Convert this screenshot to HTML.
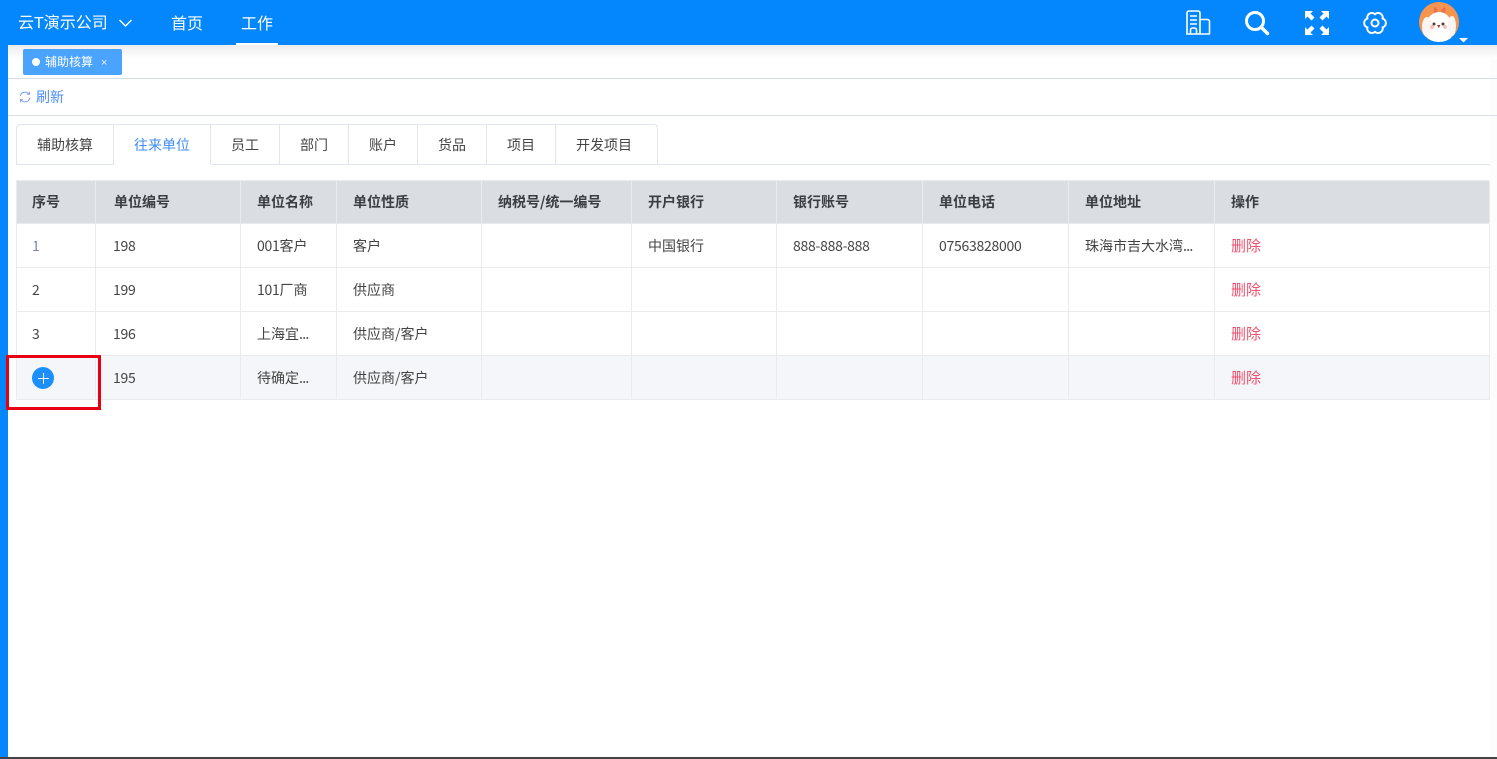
<!DOCTYPE html>
<html><head><meta charset="utf-8">
<style>
*{box-sizing:border-box}
html,body{margin:0;padding:0;width:1497px;height:759px;overflow:hidden;background:#fff}
body{position:relative;font-family:"Noto Sans CJK SC","Liberation Sans",sans-serif;font-size:14px;color:#333}
.a{position:absolute;white-space:nowrap}
.l{position:absolute;background:#e9ebef}
.t{position:absolute;white-space:nowrap;line-height:20px;font-size:14px;color:#444}
.n{letter-spacing:-.27px}
.e{letter-spacing:-.7px}
.h{font-weight:700;color:#3a3d42}
.d{color:#f0506e;font-size:15px}
.tab{position:absolute;top:124px;height:41px;border:1px solid #e1e5ec;border-left:0;line-height:40px;padding-left:20px;font-size:14px;color:#444;background:#fff}
</style></head><body>
<div class="a" style="left:0;top:0;width:1497px;height:45px;background:#0487fc"></div>
<div class="a" style="left:0;top:45px;width:8px;height:714px;background:#0487fc"></div>
<div class="a" style="left:8px;top:45px;width:1489px;height:14px;background:linear-gradient(#ececec,#fff)"></div>
<div class="a" style="left:1490px;top:59px;width:7px;height:698px;background:#fcfcfc"></div>
<div class="a" style="left:18px;top:14px;font-size:16px;line-height:20px;color:#fff;font-family:'Liberation Sans','Noto Sans CJK SC',sans-serif">云T演示公司</div>
<svg class="a" style="left:118px;top:18px" width="15" height="11" viewBox="0 0 15 11"><path d="M1.500 2 L7.500 8 L13.500 2" fill="none" stroke="#fff" stroke-width="1.400"/></svg>
<div class="a" style="left:171px;top:11px;font-size:16px;line-height:22px;color:#fff">首页</div>
<div class="a" style="left:241px;top:11px;font-size:16px;line-height:22px;color:#fff">工作</div>
<div class="a" style="left:236px;top:43px;width:42px;height:2px;background:#fff"></div>
<svg class="a" style="left:1185px;top:10px" width="26" height="25" viewBox="0 0 26 25" fill="none" stroke="#fff" stroke-width="1.600"><path d="M2 24V3a2 2 0 0 1 2-2h9a2 2 0 0 1 2 2V24M15 9.500h7.500a2 2 0 0 1 2 2V24M1 24h24M5 6h7M5 10h7M5 14h7M5.500 24v-4a2 2 0 0 1 2-2h2a2 2 0 0 1 2 2v4"/></svg>
<svg class="a" style="left:1243px;top:9px" width="28" height="27" viewBox="0 0 28 27" fill="none" stroke="#fff"><circle cx="12" cy="12" r="8.500" stroke-width="3"/><path d="M18.500 18.500L24.500 24.500" stroke-width="3.400" stroke-linecap="round"/></svg>
<svg class="a" style="left:1304px;top:10px" width="26" height="26" viewBox="0 0 26 26" fill="#fff"><path d="M1 1h8L6.500 3.500 10.500 7.500 7.500 10.500 3.500 6.500 1 9zM25 1h-8l2.500 2.500-4 4 3 3 4-4L25 9zM1 25h8l-2.500-2.500 4-4-3-3-4 4L1 17zM25 25h-8l2.500-2.500-4-4 3-3 4 4L25 17z"/></svg>
<svg class="a" style="left:1363px;top:12px" width="24" height="22" viewBox="0 0 24 22" fill="none" stroke="#fff" stroke-width="2"><path d="M12 2.200A4.600 4.600 0 0 1 19.620 6.600A4.600 4.600 0 0 1 19.620 15.400A4.600 4.600 0 0 1 12 19.800A4.600 4.600 0 0 1 4.380 15.400A4.600 4.600 0 0 1 4.380 6.600A4.600 4.600 0 0 1 12 2.200Z"/><circle cx="12" cy="11" r="3.500"/></svg>
<svg class="a" style="left:1419px;top:2px" width="40" height="40" viewBox="0 0 40 40"><defs><clipPath id="c"><circle cx="20" cy="20" r="20"/></clipPath></defs><g clip-path="url(#c)"><rect width="40" height="40" fill="#f5954e"/><path d="M19 10C17 3 14 4 15 11ZM22 10C24 3 28 4 26 11Z" fill="#ea6f55"/><ellipse cx="20" cy="27" rx="14" ry="17" fill="#fff"/><ellipse cx="8" cy="25" rx="5" ry="10" fill="#f8f5f2"/><ellipse cx="33" cy="24" rx="4" ry="10" fill="#f8f5f2"/><circle cx="15" cy="22" r="1.500" fill="#5a3a30"/><circle cx="24" cy="22" r="1.500" fill="#5a3a30"/><circle cx="13" cy="25" r="2" fill="#f5c0b8"/><circle cx="26" cy="25" r="2" fill="#f5c0b8"/><path d="M18 23h3.500l-1.700 3z" fill="#a03c30"/></g></svg>
<svg class="a" style="left:1459px;top:38px" width="9" height="5" viewBox="0 0 9 5"><path d="M0 0h9L4.500 4.500z" fill="#fff"/></svg>

<div class="a" style="left:23px;top:49px;width:99px;height:26px;background:#4aa3fd;border-radius:2px"></div>
<div class="a" style="left:32px;top:58px;width:8px;height:8px;border-radius:50%;background:#fff"></div>
<div class="a" style="left:45px;top:52px;font-size:12px;line-height:20px;color:#fff">辅助核算</div>
<div class="a" style="left:101px;top:53px;font-size:11px;line-height:20px;color:#e4effc;font-family:'Liberation Sans',sans-serif">×</div>
<div class="l" style="left:8px;top:78px;width:1489px;height:1px;background:#d8dce5"></div>
<svg class="a" style="left:19px;top:91px" width="12" height="12" viewBox="0 0 12 12" fill="none" stroke="#7f9ff0" stroke-width="1"><path d="M1.200 5A5 5 0 0 1 10 3M10.800 7A5 5 0 0 1 2 9M10.500 .8V3.300H8M1.500 11.200V8.700H4"/></svg>
<div class="a" style="left:36px;top:87px;font-size:14px;line-height:20px;color:#4c8cf5">刷新</div>
<div class="l" style="left:8px;top:115px;width:1489px;height:1px;background:#d8dce5"></div>

<div class="l" style="left:16px;top:164px;width:1474px;height:1px;background:#e1e5ec"></div>
<div class="tab" style="left:16px;width:98px;border-left:1px solid #e1e5ec;border-top-left-radius:4px">辅助核算</div>
<div class="tab" style="left:114px;width:97px;color:#3d8ef5;border-bottom-color:#fff">往来单位</div>
<div class="tab" style="left:211px;width:69px">员工</div>
<div class="tab" style="left:280px;width:69px">部门</div>
<div class="tab" style="left:349px;width:69px">账户</div>
<div class="tab" style="left:418px;width:69px">货品</div>
<div class="tab" style="left:487px;width:69px">项目</div>
<div class="tab" style="left:556px;width:102px;border-top-right-radius:4px">开发项目</div>

<div class="a" style="left:16px;top:181px;width:1474px;height:42px;background:#dadde2"></div>
<div class="a" style="left:16px;top:356px;width:1474px;height:43px;background:#f5f6fa"></div>
<div class="l" style="left:16px;top:180px;width:1474px;height:1px"></div>
<div class="l" style="left:16px;top:223px;width:1474px;height:1px"></div>
<div class="l" style="left:16px;top:267px;width:1474px;height:1px"></div>
<div class="l" style="left:16px;top:311px;width:1474px;height:1px"></div>
<div class="l" style="left:16px;top:355px;width:1474px;height:1px"></div>
<div class="l" style="left:16px;top:399px;width:1474px;height:1px"></div>
<div class="l" style="left:16px;top:180px;width:1px;height:220px"></div>
<div class="l" style="left:95px;top:180px;width:1px;height:220px"></div>
<div class="l" style="left:240px;top:180px;width:1px;height:220px"></div>
<div class="l" style="left:336px;top:180px;width:1px;height:220px"></div>
<div class="l" style="left:481px;top:180px;width:1px;height:220px"></div>
<div class="l" style="left:631px;top:180px;width:1px;height:220px"></div>
<div class="l" style="left:776px;top:180px;width:1px;height:220px"></div>
<div class="l" style="left:922px;top:180px;width:1px;height:220px"></div>
<div class="l" style="left:1068px;top:180px;width:1px;height:220px"></div>
<div class="l" style="left:1214px;top:180px;width:1px;height:220px"></div>
<div class="l" style="left:1489px;top:180px;width:1px;height:220px"></div>

<div class="t h" style="left:32px;top:192px">序号</div>
<div class="t h" style="left:114px;top:192px">单位编号</div>
<div class="t h" style="left:257px;top:192px">单位名称</div>
<div class="t h" style="left:353px;top:192px">单位性质</div>
<div class="t h" style="left:498px;top:192px">纳税号/统一编号</div>
<div class="t h" style="left:648px;top:192px">开户银行</div>
<div class="t h" style="left:793px;top:192px">银行账号</div>
<div class="t h" style="left:939px;top:192px">单位电话</div>
<div class="t h" style="left:1085px;top:192px">单位地址</div>
<div class="t h" style="left:1231px;top:192px">操作</div>

<div class="t n" style="left:32px;top:236px;color:#7a7fc0">1</div>
<div class="t n" style="left:113px;top:236px">198</div>
<div class="t" style="left:257px;top:236px"><span class="n">001</span>客户</div>
<div class="t" style="left:353px;top:236px">客户</div>
<div class="t" style="left:648px;top:236px">中国银行</div>
<div class="t n" style="left:793px;top:236px">888-888-888</div>
<div class="t n" style="left:939px;top:236px">07563828000</div>
<div class="t" style="left:1085px;top:236px">珠海市吉大水湾<span class="e">...</span></div>
<div class="t d" style="left:1231px;top:236px">删除</div>

<div class="t n" style="left:32px;top:280px">2</div>
<div class="t n" style="left:113px;top:280px">199</div>
<div class="t" style="left:257px;top:280px"><span class="n">101</span>厂商</div>
<div class="t" style="left:353px;top:280px">供应商</div>
<div class="t d" style="left:1231px;top:280px">删除</div>

<div class="t n" style="left:32px;top:324px">3</div>
<div class="t n" style="left:113px;top:324px">196</div>
<div class="t" style="left:257px;top:324px">上海宜<span class="e">...</span></div>
<div class="t" style="left:353px;top:324px">供应商/客户</div>
<div class="t d" style="left:1231px;top:324px">删除</div>

<div class="a" style="left:32px;top:367px;width:22px;height:22px;border-radius:50%;background:#1b8ffb"></div>
<div class="a" style="left:38px;top:378px;width:11px;height:1px;background:#fff"></div>
<div class="a" style="left:43px;top:373px;width:1px;height:11px;background:#fff"></div>
<div class="t n" style="left:113px;top:368px">195</div>
<div class="t" style="left:257px;top:368px">待确定<span class="e">...</span></div>
<div class="t" style="left:353px;top:368px">供应商/客户</div>
<div class="t d" style="left:1231px;top:368px">删除</div>

<div class="a" style="left:6px;top:355px;width:95px;height:55px;border:3px solid #e60012"></div>
<div class="a" style="left:0;top:757px;width:1497px;height:2px;background:#444"></div>
</body></html>
